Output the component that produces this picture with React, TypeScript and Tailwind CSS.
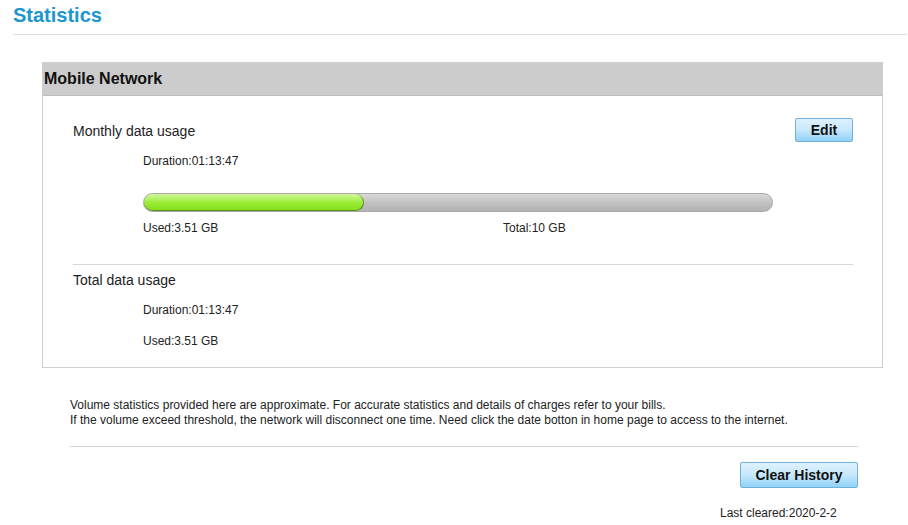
import React from 'react';

const font = { fontFamily: '"Liberation Sans", Arial, sans-serif' };

const Button: React.FC<{ label: string; className?: string }> = ({ label, className }) => (
  <button
    className={`border border-[#72b0dc] rounded-[2px] bg-gradient-to-b from-[#dff2fd] via-[#c6e8fb] to-[#8fd2f7] text-[14px] font-bold text-[#111] ${className ?? ''}`}
  >
    {label}
  </button>
);

const App: React.FC = () => {
  const used = 3.51;
  const total = 10;
  const pct = (used / total) * 100;

  return (
    <div className="w-[908px] h-[525px] bg-white text-[#222] overflow-hidden" style={font}>
      {/* Title */}
      <div className="ml-[13px] mr-[1px] pt-[3px] pb-[7px] border-b border-[#e0e0e0]">
        <h1 className="text-[20px] leading-[24px] font-bold text-[#1b97cd]">Statistics</h1>
      </div>

      {/* Mobile network panel */}
      <div className="ml-[42px] mt-[27px] w-[841px] border border-[#cfcfcf]">
        <div className="h-[33px] bg-[#cccccc] border-b border-[#bdbdbd] pl-[1px] flex items-center">
          <span className="text-[16px] font-bold text-[#111]">Mobile Network</span>
        </div>

        <div className="pl-[30px] pr-[29px] pb-[19px]">
          <div className="mt-[22px] flex items-center justify-between">
            <span className="text-[14px] leading-[16px] mt-[2px]">Monthly data usage</span>
            <Button label="Edit" className="w-[58px] h-[24px]" />
          </div>

          <div className="ml-[70px]">
            <div className="mt-[12px] text-[12px] leading-[14px]">Duration:01:13:47</div>

            <div className="mt-[25px] w-[630px] h-[19px] rounded-full border border-[#a8a8a8] bg-gradient-to-b from-[#d9d9d9] via-[#c2c2c2] to-[#b3b3b3] overflow-hidden">
              <div
                className="h-full rounded-full border-r border-b border-[#5e8f1c] bg-gradient-to-b from-[#d2f79a] via-[#9eee38] to-[#82e11c]"
                style={{ width: `${pct}%` }}
              />
            </div>

            <div className="mt-[9px] flex text-[12px] leading-[14px]">
              <span className="w-[360px]">Used:3.51 GB</span>
              <span>Total:10 GB</span>
            </div>
          </div>

          <div className="mt-[29px] border-t border-[#d6d6d6]" />

          <div className="mt-[7px] text-[14px] leading-[16px]">Total data usage</div>
          <div className="ml-[70px]">
            <div className="mt-[15px] text-[12px] leading-[14px]">Duration:01:13:47</div>
            <div className="mt-[17px] text-[12px] leading-[14px]">Used:3.51 GB</div>
          </div>
        </div>
      </div>

      {/* Notes */}
      <div className="ml-[70px] w-[788px]">
        <div className="mt-[30px] text-[12px] leading-[15px]">
          <p>Volume statistics provided here are approximate. For accurate statistics and details of charges refer to your bills.</p>
          <p>If the volume exceed threshold, the network will disconnect one time. Need click the date botton in home page to access to the internet.</p>
        </div>
        <div className="mt-[18px] border-t border-[#d6d6d6]" />
        <div className="mt-[15px] flex justify-end">
          <Button label="Clear History" className="w-[118px] h-[26px]" />
        </div>
        <div className="mt-[18px] ml-[650px] text-[12px] leading-[14px]">Last cleared:2020-2-2</div>
      </div>
    </div>
  );
};

export default App;
